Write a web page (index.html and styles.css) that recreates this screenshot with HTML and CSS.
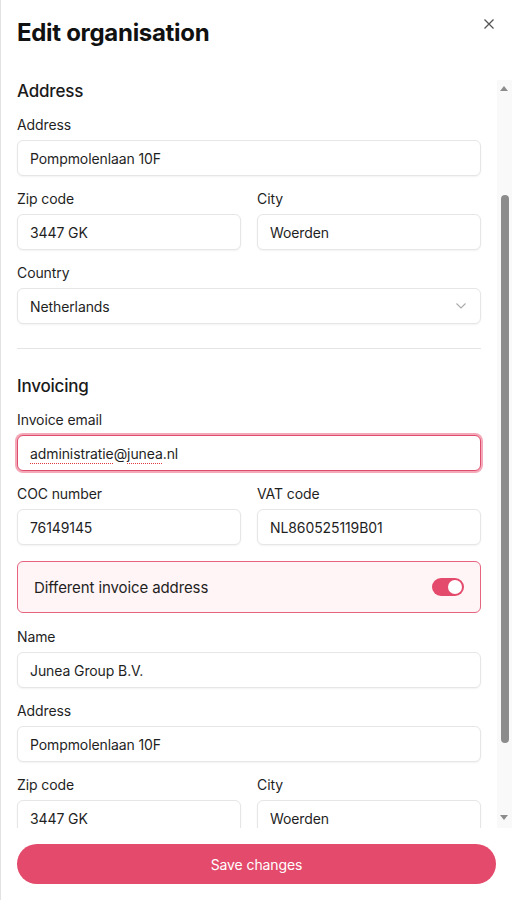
FILE: index.html
```html
<!DOCTYPE html>
<html lang="en">
<head>
<meta charset="utf-8">
<title>Edit organisation</title>
<link rel="stylesheet" href="styles.css">
</head>
<body>
<div class="drawer">
  <header class="head">
    <h1 class="title">Edit organisation</h1>
    <button class="close" aria-label="Close">
      <svg width="10" height="10" viewBox="0 0 10 10"><path d="M0.5 0.5L9.5 9.5M9.5 0.5L0.5 9.5" stroke="#555" stroke-width="1.3" fill="none"/></svg>
    </button>
  </header>

  <div class="scroll">
    <div class="content">
      <section class="section">
        <h2 class="section-title">Address</h2>
        <div class="field">
          <label class="label">Address</label>
          <input class="input" value="Pompmolenlaan 10F">
        </div>
        <div class="row">
          <div class="field">
            <label class="label">Zip code</label>
            <input class="input" value="3447 GK">
          </div>
          <div class="field">
            <label class="label">City</label>
            <input class="input" value="Woerden">
          </div>
        </div>
        <div class="field">
          <label class="label">Country</label>
          <div class="input select">
            <span>Netherlands</span>
            <svg width="10" height="6" viewBox="0 0 10 6"><path d="M0.5 0.5L5 5L9.5 0.5" stroke="#aaa" stroke-width="1.1" fill="none"/></svg>
          </div>
        </div>
      </section>

      <hr class="divider">

      <section class="section">
        <h2 class="section-title">Invoicing</h2>
        <div class="field">
          <label class="label">Invoice email</label>
          <div class="input focused"><span class="spell">administratie</span>@<span class="spell">junea</span>.nl</div>
        </div>
        <div class="row">
          <div class="field">
            <label class="label">COC number</label>
            <input class="input" value="76149145">
          </div>
          <div class="field">
            <label class="label">VAT code</label>
            <input class="input" value="NL860525119B01">
          </div>
        </div>
        <div class="toggle-box">
          <span class="toggle-label">Different invoice address</span>
          <span class="switch on"><span class="knob"></span></span>
        </div>
        <div class="field">
          <label class="label">Name</label>
          <input class="input" value="Junea Group B.V.">
        </div>
        <div class="field">
          <label class="label">Address</label>
          <input class="input" value="Pompmolenlaan 10F">
        </div>
        <div class="row">
          <div class="field">
            <label class="label">Zip code</label>
            <input class="input" value="3447 GK">
          </div>
          <div class="field">
            <label class="label">City</label>
            <input class="input" value="Woerden">
          </div>
        </div>
      </section>
    </div>
    <div class="scrollbar">
      <span class="arrow up"></span>
      <span class="thumb"></span>
      <span class="arrow down"></span>
    </div>
  </div>

  <footer class="foot">
    <button class="save">Save changes</button>
  </footer>
</div>
</body>
</html>
```

FILE: styles.css
```css
* { box-sizing: border-box; }
html, body { margin: 0; padding: 0; background: #fff; }
body {
  font-family: Inter, "Noto Sans", sans-serif;
  color: #1c1c1c;
}
.drawer {
  width: 512px;
  height: 900px;
  display: flex;
  flex-direction: column;
  border-left: 1px solid #e2e2e2;
  background: #fff;
}
.head {
  height: 80px;
  flex: none;
  display: flex;
  justify-content: space-between;
  align-items: flex-start;
  padding: 17px 13px 0 16px;
}
.title {
  margin: 0;
  font-size: 24px;
  line-height: 32px;
  font-weight: 700;
  letter-spacing: -0.3px;
  color: #111;
}
.close {
  width: 20px;
  height: 20px;
  margin-top: -3px;
  padding: 0;
  border: 0;
  background: transparent;
  display: flex;
  align-items: center;
  justify-content: center;
}
.scroll {
  position: relative;
  flex: 1;
  overflow: hidden;
  padding: 0 31px 0 16px;
}
.content { display: flex; flex-direction: column; }
.section { display: flex; flex-direction: column; gap: 14px; }
.section-title {
  margin: -1px 0 -1px;
  font-size: 17px;
  line-height: 24px;
  font-weight: 500;
  letter-spacing: -0.2px;
  color: #1a1a1a;
}
.field { display: flex; flex-direction: column; gap: 6px; min-width: 0; }
.label {
  font-size: 14px;
  line-height: 18px;
  color: #1f1f1f;
  letter-spacing: -0.1px;
}
.row { display: grid; grid-template-columns: 1fr 1fr; gap: 16px; }
.input {
  height: 36px;
  width: 100%;
  border: 1px solid #e6e6e6;
  border-radius: 6px;
  box-shadow: 0 1px 2px rgba(0,0,0,0.05);
  background: #fff;
  padding: 0 12px;
  font-family: inherit;
  font-size: 14px;
  color: #1f1f1f;
  letter-spacing: -0.1px;
  outline: none;
  display: flex;
  align-items: center;
}
.select { justify-content: space-between; padding-right: 14px; }
.focused {
  border-color: #de4d6d;
  box-shadow: 0 0 0 2px #f3a9b8;
}
.spell {
  text-decoration: underline dotted #e0393e;
  text-decoration-thickness: 1px;
  text-underline-offset: 4px;
}
.divider {
  margin: 24px 0 26px;
  border: 0;
  border-top: 1px solid #e5e5e5;
  height: 0;
}
.toggle-box {
  margin: 2px 0 1px;
  height: 52px;
  display: flex;
  align-items: center;
  justify-content: space-between;
  padding: 0 16px;
  border: 1px solid #e6647f;
  border-radius: 6px;
  background: #fff5f6;
}
.toggle-label { font-size: 15px; color: #1f1f1f; letter-spacing: -0.1px; }
.switch {
  width: 32px;
  height: 18px;
  border-radius: 9px;
  background: #e34a6b;
  display: flex;
  align-items: center;
  justify-content: flex-end;
  padding: 2px;
}
.knob { width: 14px; height: 14px; border-radius: 50%; background: #fff; }
.scrollbar {
  position: absolute;
  top: 0;
  right: 0;
  bottom: 0;
  width: 15px;
  background: #f9f9f9;
}
.arrow {
  position: absolute;
  left: 3px;
  width: 0;
  height: 0;
  border-left: 4.5px solid transparent;
  border-right: 4.5px solid transparent;
}
.arrow.up { top: 6px; border-bottom: 5px solid #8c8c8c; }
.arrow.down { bottom: 8px; border-top: 5px solid #8c8c8c; }
.thumb {
  position: absolute;
  left: 4px;
  width: 8px;
  top: 115px;
  height: 548px;
  border-radius: 4px;
  background: #8c8c8c;
}
.foot { flex: none; padding: 16px; }
.save {
  width: 100%;
  height: 40px;
  border: 0;
  border-radius: 20px;
  background: #e34a6b;
  color: #fff;
  font-family: inherit;
  font-size: 14px;
  letter-spacing: -0.1px;
}
```
